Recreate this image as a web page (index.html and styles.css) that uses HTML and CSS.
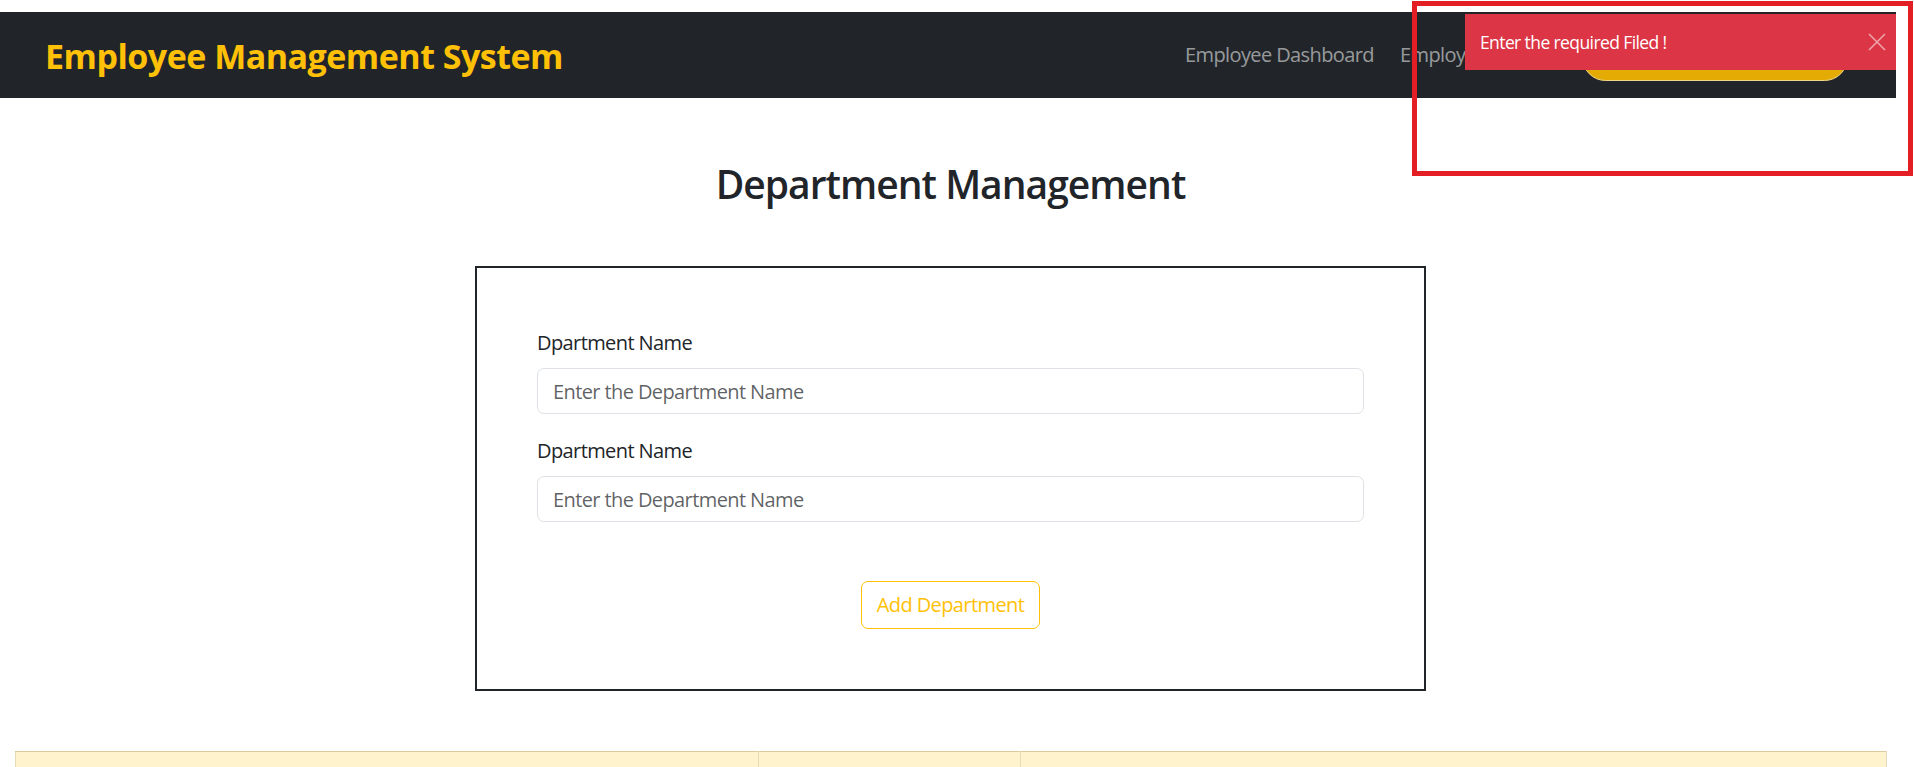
FILE: index.html
```html
<!DOCTYPE html>
<html lang="en">
<head>
<meta charset="utf-8">
<title>Employee Management System</title>
<link rel="stylesheet" href="styles.css">
</head>
<body>
<div class="page">
  <nav class="navbar">
    <a class="brand" href="#">Employee Management System</a>
    <ul class="nav-links">
      <li><a class="nav-link" href="#">Employee Dashboard</a></li>
      <li><a class="nav-link" href="#">Employee List</a></li>
    </ul>
    <a class="pill" href="#">Add Employee</a>
  </nav>

  <main class="main">
    <h2 class="title">Department Management</h2>

    <form class="card">
      <div class="group">
        <label class="label" for="d1">Dpartment Name</label>
        <input class="input" id="d1" type="text" placeholder="Enter the Department Name">
      </div>
      <div class="group">
        <label class="label" for="d2">Dpartment Name</label>
        <input class="input" id="d2" type="text" placeholder="Enter the Department Name">
      </div>
      <div class="actions">
        <button class="btn-outline" type="button">Add Department</button>
      </div>
    </form>

    <table class="dept-table">
      <thead>
        <tr>
          <th class="col-name">Department Name</th>
          <th class="col-code">Code</th>
          <th class="col-action">Action</th>
        </tr>
      </thead>
    </table>
  </main>
</div>

<div class="toast">
  <span class="toast-text">Enter the required Filed !</span>
  <button class="toast-close" type="button" aria-label="close">
    <svg width="18" height="18" viewBox="0 0 18 18"><path d="M1 1 L17 17 M17 1 L1 17" stroke="currentColor" stroke-width="1.6" fill="none"/></svg>
  </button>
</div>

<div class="annotation"></div>
</body>
</html>
```

FILE: styles.css
```css
* { box-sizing: border-box; }

html, body {
  margin: 0;
  padding: 0;
  background: #ffffff;
}

body {
  font-family: "Open Sans", "Noto Sans", sans-serif;
  font-size: 20px;
  color: #212529;
  letter-spacing: -0.03em;
  overflow: hidden;
}

.page {
  width: 1901px;
  padding-top: 12px;
}

/* Navbar */
.navbar {
  width: 1896px;
  height: 86px;
  background: #212529;
  display: flex;
  align-items: center;
  padding: 0 48px 0 45px;
}

.brand {
  font-size: 34px;
  font-weight: 700;
  letter-spacing: -0.015em;
  color: #ffc107;
  text-decoration: none;
  line-height: 1.2;
  margin-top: 2px;
}

.nav-links {
  list-style: none;
  margin: 0 0 0 auto;
  padding: 0;
  display: flex;
}

.nav-link {
  display: block;
  padding: 0 13px;
  color: rgba(255, 255, 255, 0.55);
  text-decoration: none;
  line-height: 30px;
}

.pill {
  margin-left: 48px;
  margin-top: 5px;
  width: 266px;
  height: 47px;
  border-radius: 24px;
  background: #e4ab05;
  border: 1px solid #f2d78a;
  color: #212529;
  text-decoration: none;
  display: flex;
  align-items: center;
  justify-content: center;
}

/* Main */
.main {
  padding: 0 15px;
}

.title {
  margin: 62px 0 58px;
  text-align: center;
  font-size: 39px;
  font-weight: 600;
  letter-spacing: -0.025em;
  line-height: 48px;
  color: #212529;
}

.card {
  width: 951px;
  margin: 0 auto;
  border: 2px solid #212529;
  padding: 60px;
}

.group {
  margin-bottom: 22px;
}

.label {
  display: block;
  line-height: 30px;
  margin-bottom: 10px;
  color: #212529;
}

.input {
  display: block;
  width: 100%;
  height: 46px;
  padding: 7px 15px;
  border: 1px solid #dee2e6;
  border-radius: 7px;
  font-family: inherit;
  font-size: 20px;
  letter-spacing: -0.03em;
  line-height: 30px;
  color: #212529;
  background: #fff;
}

.input::placeholder {
  color: rgba(33, 37, 41, 0.72);
}

.actions {
  padding-top: 37px;
  display: flex;
  justify-content: center;
}

.btn-outline {
  height: 48px;
  padding: 8px 15px;
  border: 1px solid #ffc107;
  border-radius: 7px;
  background: transparent;
  color: #ffc107;
  font-family: inherit;
  font-size: 20px;
  letter-spacing: -0.03em;
  line-height: 30px;
}

.dept-table {
  margin-top: 60px;
  width: 1871px;
  border-collapse: collapse;
  table-layout: fixed;
}

.dept-table th {
  background: #fff3cd;
  border: 1px solid #e6dbb9;
  border-top-color: #d9caa0;
  padding: 10px;
  text-align: left;
  font-weight: 700;
  line-height: 30px;
}

.col-name { width: 743px; }
.col-code { width: 262px; }
.col-action { width: 866px; }

/* Toast overlay */
.toast {
  position: absolute;
  top: 14px;
  left: 1465px;
  width: 431px;
  height: 56px;
  background: #dc3545;
  color: #ffffff;
  display: flex;
  align-items: center;
  padding: 0 10px 0 15px;
  font-size: 17.5px;
}

.toast-text {
  flex: 1;
}

.toast-close {
  border: 0;
  background: transparent;
  padding: 0;
  color: rgba(255, 255, 255, 0.55);
  width: 18px;
  height: 18px;
  display: flex;
}

/* Red annotation rectangle */
.annotation {
  position: absolute;
  left: 1412px;
  top: 1px;
  width: 501px;
  height: 175px;
  border: 5px solid #e41e25;
}
```
